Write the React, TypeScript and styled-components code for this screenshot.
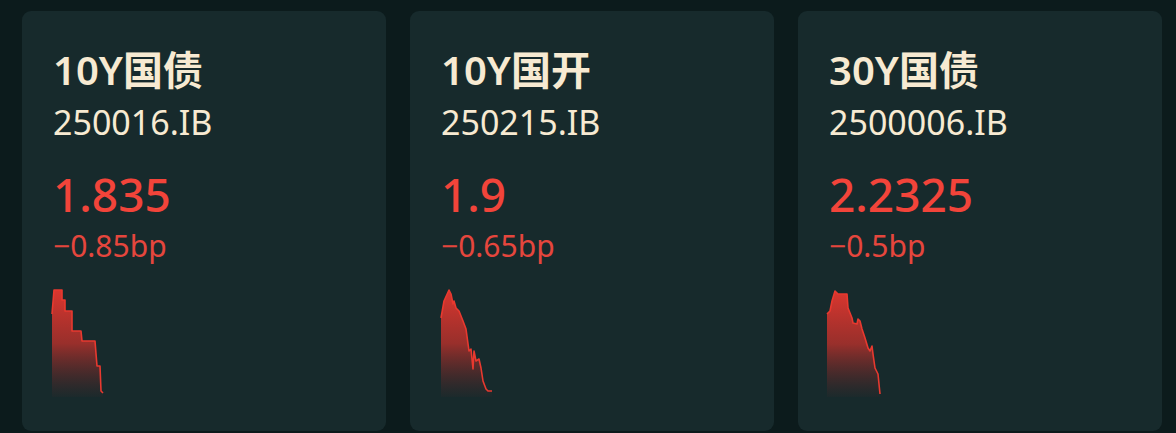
import React from 'react'
import styled, { createGlobalStyle } from 'styled-components'

const GlobalStyle = createGlobalStyle`
  html, body {
    margin: 0;
    padding: 0;
    background: #0c1b1c;
  }
  body {
    font-family: "Noto Sans", "Noto Sans CJK SC", sans-serif;
  }
`

const Page = styled.div`
  display: flex;
  gap: 24px;
  padding: 11px 14px 2px 22px;
  width: 1176px;
  height: 433px;
  box-sizing: border-box;
`

const Card = styled.div`
  flex: 0 0 364px;
  height: 420px;
  box-sizing: border-box;
  background: #172a2c;
  border-radius: 9px;
  padding: 36px 31px 0;
  display: flex;
  flex-direction: column;
`

const Title = styled.div`
  color: #f7ead2;
  font-size: 40px;
  font-weight: 600;
  line-height: 46px;
  height: 46px;
`

const Code = styled.div`
  color: #f7ead2;
  font-size: 34px;
  font-weight: 400;
  line-height: 50px;
  margin-top: 4px;
`

const Price = styled.div`
  color: #f2443a;
  font-size: 46px;
  font-weight: 500;
  line-height: 50px;
  margin-top: 22px;
`

const Change = styled.div`
  color: #e5463d;
  font-size: 30px;
  font-weight: 400;
  line-height: 44px;
  margin-top: 5px;
`

const Spark = styled.svg`
  display: block;
  margin: 19px 0 0 -2px;
  overflow: visible;
`

type Bond = {
  name: string
  code: string
  price: string
  change: string
  pts: [number, number][]
}

const bonds: Bond[] = [
  {
    name: '10Y国债',
    code: '250016.IB',
    price: '1.835',
    change: '−0.85bp',
    pts: [[1, 27], [3, 3], [11, 3], [11, 13], [14, 13], [14, 24], [21, 24], [21, 44], [30, 44], [31, 54], [44, 54], [46, 79], [49, 79], [50, 104], [52, 106]],
  },
  {
    name: '10Y国开',
    code: '250215.IB',
    price: '1.9',
    change: '−0.65bp',
    pts: [[2, 31], [5, 14], [10, 3], [12, 7], [14, 17], [15, 14], [17, 21], [20, 24], [24, 34], [27, 42], [30, 64], [32, 62], [34, 82], [35, 64], [37, 74], [40, 72], [42, 81], [44, 94], [47, 102], [49, 104], [53, 104]],
  },
  {
    name: '30Y国债',
    code: '2500006.IB',
    price: '2.2325',
    change: '−0.5bp',
    pts: [[0, 27], [3, 24], [5, 14], [8, 4], [11, 7], [16, 7], [20, 7], [21, 21], [25, 31], [26, 36], [30, 37], [31, 32], [33, 34], [35, 42], [38, 51], [41, 61], [43, 64], [45, 59], [46, 67], [48, 81], [51, 87], [53, 107]],
  },
]

const Sparkline = ({ id, pts }: { id: string; pts: [number, number][] }) => {
  const line = pts.map((p) => p.join(',')).join(' ')
  const first = pts[0]
  const last = pts[pts.length - 1]
  const area = `M${first[0]},110 L${line.replace(/ /g, ' L')} L${last[0]},110 Z`
  return (
    <Spark width="60" height="110" viewBox="0 0 60 110">
      <defs>
        <linearGradient id={id} x1="0" y1="0" x2="0" y2="1">
          <stop offset="0" stopColor="#e5372f" stopOpacity="0.95" />
          <stop offset="0.5" stopColor="#c4312b" stopOpacity="0.75" />
          <stop offset="1" stopColor="#7a2626" stopOpacity="0.05" />
        </linearGradient>
      </defs>
      <path d={area} fill={`url(#${id})`} />
      <polyline points={line} fill="none" stroke="#e8392f" strokeWidth="1.6" strokeLinejoin="round" />
    </Spark>
  )
}

export default function App() {
  return (
    <>
      <GlobalStyle />
      <Page>
        {bonds.map((b, i) => (
          <Card key={b.code}>
            <Title>{b.name}</Title>
            <Code>{b.code}</Code>
            <Price>{b.price}</Price>
            <Change>{b.change}</Change>
            <Sparkline id={`g${i}`} pts={b.pts} />
          </Card>
        ))}
      </Page>
    </>
  )
}
